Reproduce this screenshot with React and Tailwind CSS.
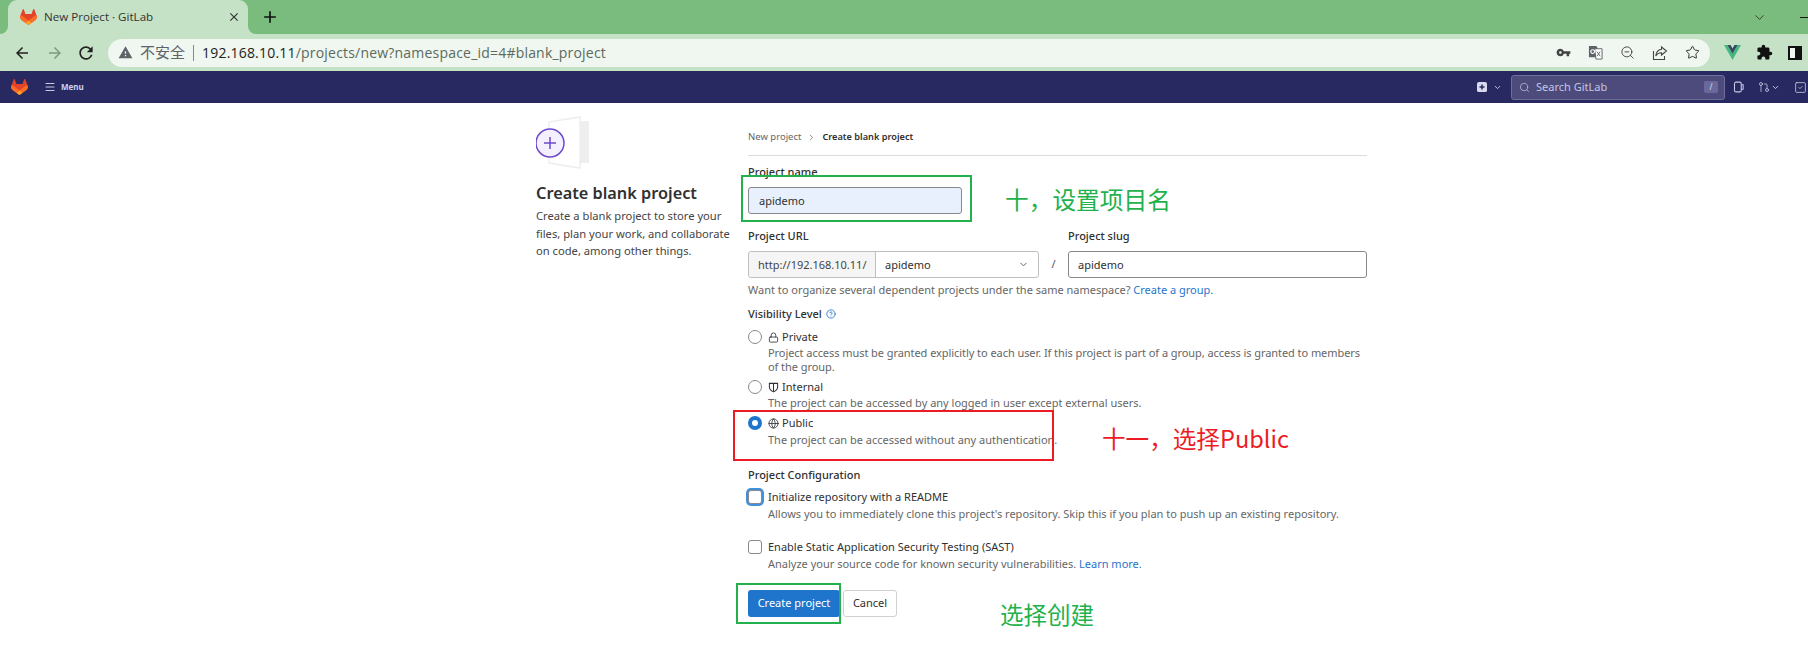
import React from 'react';
import {
  ChevronDown,
  ChevronRight,
  CircleHelp,
  Globe,
  GitPullRequest,
  Lock,
  Search,
  SquareCheck,
  Star,
  ZoomOut,
  Menu,
} from 'lucide-react';
import { MdAdd, MdArrowBack, MdArrowForward, MdClose, MdExtension, MdRefresh, MdVpnKey, MdWarning } from 'react-icons/md';

const pageFont = "font-['Noto_Sans','Open_Sans',sans-serif]";
const cjk = "font-['Noto_Sans_CJK_SC','Noto_Sans',sans-serif]";

const GitLabLogo = ({ className }) => (
  <svg viewBox="0 0 25 24" className={className}>
    <path fill="#E24329" d="M24.507 9.5l-.034-.09L21.082.562a.896.896 0 00-1.694.091l-2.29 7.01H7.825L5.535.653a.898.898 0 00-1.694-.09L.451 9.411.416 9.5a6.297 6.297 0 002.09 7.278l.012.01.03.022 5.16 3.867 2.56 1.935 1.554 1.176a1.051 1.051 0 001.268 0l1.555-1.176 2.56-1.935 5.197-3.89.014-.01A6.297 6.297 0 0024.507 9.5z" />
    <path fill="#FC6D26" d="M24.507 9.5l-.034-.09a11.44 11.44 0 00-4.56 2.051l-7.447 5.632 4.742 3.584 5.197-3.89.014-.01A6.297 6.297 0 0024.507 9.5z" />
    <path fill="#FCA326" d="M7.707 20.677l2.56 1.935 1.555 1.176a1.051 1.051 0 001.268 0l1.555-1.176 2.56-1.935-4.743-3.584-4.755 3.584z" />
    <path fill="#FC6D26" d="M5.01 11.461a11.43 11.43 0 00-4.56-2.05L.416 9.5a6.297 6.297 0 002.09 7.278l.012.01.03.022 5.16 3.867 4.745-3.584-7.444-5.632z" />
  </svg>
);

const TranslateIcon = () => (
  <svg viewBox="0 0 16 16" className="w-[15px] h-[15px]">
    <path fill="#5f6368" d="M1 1h8l1 2v10H1z" />
    <path fill="#fff" stroke="#5f6368" d="M7 4h8v11H8.5z" />
    <circle cx="5" cy="7" r="2" fill="none" stroke="#fff" strokeWidth="1.2" />
    <path stroke="#5f6368" strokeWidth="1" d="M9.5 7l3.5 5M13 7l-3.5 5" />
  </svg>
);

const ShareIcon = () => (
  <svg viewBox="0 0 16 16" className="w-[16px] h-[16px]" fill="none" stroke="#444" strokeWidth="1.1">
    <path d="M1.5 6v8.5h11V11" />
    <path d="M9.5 2l5 4-5 4V7.8C7 7.8 5 8.6 3.8 11 4 7.5 6 4.8 9.5 4.2z" />
  </svg>
);

const VueLogo = () => (
  <svg viewBox="0 0 16 14" className="w-[17px] h-[15px]">
    <path fill="#42b883" d="M0 0h3.2L8 8.2 12.8 0H16L8 14z" />
    <path fill="#35495e" d="M3.2 0h2.9L8 3.3 9.9 0h2.9L8 8.2z" />
  </svg>
);

const SidePanelIcon = () => (
  <svg viewBox="0 0 14 14" className="w-[14px] h-[14px]">
    <path fill="#111" d="M0 0h14v14H0z" />
    <path fill="#f0f6f0" d="M2 2h5v10H2z" />
  </svg>
);

const NewIcon = () => (
  <svg viewBox="0 0 16 16" className="w-[10px] h-[10px]">
    <rect width="16" height="16" rx="3" fill="#d9d9ef" />
    <path stroke="#292961" strokeWidth="2.4" d="M8 4v8M4 8h8" />
  </svg>
);

const IssuesIcon = () => (
  <svg viewBox="0 0 16 16" className="w-[12px] h-[14px]" fill="none" stroke="#c9c9e4" strokeWidth="1.4">
    <rect x="2" y="1.5" width="9" height="13" rx="2" />
    <path d="M11 5h2.5v6H11" />
  </svg>
);

const ShieldIcon = () => (
  <svg viewBox="0 0 12 12" className="w-[11px] h-[11px] ml-[6px]" fill="none" stroke="#303030" strokeWidth="1.1">
    <path d="M1.5 1.5h9v4c0 2.6-2 4.2-4.5 5.3C3.500 9.700 1.500 8.100 1.500 5.500z" />
    <path d="M6 1.500v9" />
  </svg>
);

const Illustration = () => (
  <svg viewBox="0 0 54 53" className="w-[54px] h-[53px] block">
    <path d="M44 5h9v42h-9z" fill="#eee" />
    <path d="M13 6 44 1v51l-31-5z" fill="#fff" stroke="#eee" strokeWidth="1.5" />
    <circle cx="14" cy="27" r="14" fill="#f4f0ff" stroke="#6e49cb" strokeWidth="1.5" />
    <path d="M14 21v12M8 27h12" stroke="#6e49cb" strokeWidth="1.5" />
  </svg>
);

const Radio = ({ checked }) =>
  checked ? (
    <span className="w-[14px] h-[14px] rounded-full bg-[#1f75cb] flex items-center justify-center shrink-0">
      <span className="w-[6px] h-[6px] rounded-full bg-white" />
    </span>
  ) : (
    <span className="w-[14px] h-[14px] rounded-full border border-[#89888d] bg-white shrink-0" />
  );

const VisibilityOption = ({ icon, label, checked, className }) => (
  <div className={`flex items-center h-[18px] ${className}`}>
    <Radio checked={checked} />
    {icon}
    <span className="ml-[3px] text-[#303030]">{label}</span>
  </div>
);

const Help = ({ children, className = '' }) => (
  <p className={`pl-[20px] leading-[14px] text-[#666] whitespace-nowrap ${className}`}>{children}</p>
);

const Label = ({ children, className = '' }) => (
  <div className={`h-[18px] leading-[18px] font-medium text-[#303030] ${className}`}>{children}</div>
);

const CheckOption = ({ focused, label, className }) => (
  <div className={`flex items-center h-[18px] ${className}`}>
    <span
      className={`w-[14px] h-[14px] rounded-[3px] border border-[#89888d] bg-white shrink-0 ${
        focused ? 'ring-2 ring-[#428fdc]' : ''
      }`}
    />
    <span className="ml-[6px] text-[#303030]">{label}</span>
  </div>
);

const Marker = ({ className }) => <div className={`absolute border-2 pointer-events-none ${className}`} />;

const App = () => {
  return (
    <div className={`relative w-[1808px] h-[664px] overflow-hidden bg-white ${pageFont}`}>
      {/* browser tab strip */}
      <div className="flex h-[34px] bg-[#7abb7e] pl-[8px]">
        <div className="relative flex items-center w-[240px] bg-[#c5e1c6] rounded-t-[9px] pl-[12px] pr-[7px]">
          <span className="absolute -left-[8px] bottom-0 w-[8px] h-[8px] bg-[#c5e1c6]">
            <span className="block w-[8px] h-[8px] bg-[#7abb7e] rounded-br-[8px]" />
          </span>
          <span className="absolute -right-[8px] bottom-0 w-[8px] h-[8px] bg-[#c5e1c6]">
            <span className="block w-[8px] h-[8px] bg-[#7abb7e] rounded-bl-[8px]" />
          </span>
          <GitLabLogo className="w-[17px] h-[16px] shrink-0" />
          <span className="ml-[7px] text-[11.6px] text-[#333] font-['Open_Sans',sans-serif] flex-1">New Project · GitLab</span>
          <MdClose size={14} className="text-[#333]" />
        </div>
        <div className="ml-[12px] flex items-center">
          <MdAdd size={20} className="text-[#111]" />
        </div>
        <div className="ml-auto flex items-center gap-[33px]">
          <ChevronDown size={15} strokeWidth={1.2} className="text-[#222]" />
          <span className="w-[8px] h-px bg-[#111]" />
        </div>
      </div>

      {/* address bar */}
      <div className="flex items-center h-[37px] bg-[#c5e1c6] pl-[13px]">
        <MdArrowBack size={18} className="text-[#222]" />
        <MdArrowForward size={18} className="ml-[15px] text-[#7e9a80]" />
        <MdRefresh size={20} className="ml-[12px] text-[#222]" />
        <div className="ml-[12px] flex items-center flex-1 h-[28px] bg-[#f0f6f0] rounded-full pl-[10px] pr-[10px]">
          <MdWarning size={15} className="text-[#5f6368]" />
          <span className={`ml-[7px] text-[15px] text-[#5f6368] ${cjk}`}>不安全</span>
          <span className="ml-[8px] w-px h-[16px] bg-[#888]" />
          <span className="ml-[8px] text-[14px] tracking-[0.2px] font-['Open_Sans',sans-serif] text-[#222]">192.168.10.11</span>
          <span className="text-[14px] tracking-[0.2px] font-['Open_Sans',sans-serif] text-[#5b6b5d]">/projects/new?namespace_id=4#blank_project</span>
          <div className="ml-auto flex items-center gap-[17px]">
            <MdVpnKey size={15} className="text-[#444]" />
            <TranslateIcon />
            <ZoomOut size={15} strokeWidth={1.5} className="text-[#444]" />
            <ShareIcon />
            <Star size={15} strokeWidth={1.6} className="text-[#333]" />
          </div>
        </div>
        <div className="ml-[14px] flex items-center gap-[15px] pr-[6px]">
          <VueLogo />
          <MdExtension size={17} className="text-[#111]" />
          <SidePanelIcon />
        </div>
      </div>

      {/* gitlab top nav */}
      <div className="flex items-center h-[32px] bg-[#292961] pl-[11px]">
        <GitLabLogo className="w-[17px] h-[16px]" />
        <Menu size={12} strokeWidth={2} className="ml-[16px] text-[#c9c9e4]" />
        <span className="ml-[5px] text-[8px] font-bold text-[#c9d4f5]">Menu</span>
        <div className="ml-auto flex items-center">
          <NewIcon />
          <ChevronDown size={9} strokeWidth={2.5} className="ml-[6px] text-[#c9c9e4]" />
          <div className="ml-[9px] flex items-center w-[214px] h-[25px] bg-[#4c4b7b] border border-[#6e6d9c] rounded-[3px] pl-[7px] pr-[6px]">
            <Search size={11} strokeWidth={1.5} className="text-[#c9c9e4]" />
            <span className="ml-[6px] text-[11px] text-[#c5c5e6]">Search GitLab</span>
            <span className="ml-auto w-[14px] h-[12px] bg-[#6a699b] rounded-[2px] text-[8px] leading-[12px] text-center text-[#dcdcf0]">/</span>
          </div>
          <div className="ml-[8px]">
            <IssuesIcon />
          </div>
          <GitPullRequest size={12} strokeWidth={1.6} className="ml-[13px] text-[#c9c9e4]" />
          <ChevronDown size={9} strokeWidth={2.5} className="ml-[1px] text-[#c9c9e4]" />
          <SquareCheck size={13} strokeWidth={1.5} className="ml-[14px] mr-[1px] text-[#c9c9e4]" />
        </div>
      </div>

      {/* page body */}
      <div className="flex pl-[536px] text-[11px]">
        <div className="w-[212px] pt-[13px] shrink-0">
          <Illustration />
          <h4 className="mt-[12px] text-[16.3px] leading-[24px] font-semibold text-[#303030]">Create blank project</h4>
          <p className="mt-[2px] w-[200px] text-[11.2px] leading-[17.5px] text-[#444]">
            Create a blank project to store your<br />files, plan your work, and collaborate<br />on code, among other things.
          </p>
        </div>

        <div className="w-[619px] shrink-0">
          <div className="flex items-center h-[18px] mt-[25px] text-[9.5px]">
            <span className="text-[#666]">New project</span>
            <ChevronRight size={9} className="mx-[6px] text-[#666]" />
            <span className="font-semibold text-[9.2px] text-[#303030]">Create blank project</span>
          </div>
          <div className="mt-[9px] border-b border-[#dcdcde]" />

          <Label className="mt-[7px]">Project name</Label>
          <div className="mt-[6px] w-[214px] h-[27px] bg-[#e8f0fe] border border-[#89888d] rounded-[3px] pl-[10px] leading-[25px] text-[#303030]">
            apidemo
          </div>

          <div className="flex mt-[13px]">
            <Label className="w-[320px]">Project URL</Label>
            <Label>Project slug</Label>
          </div>
          <div className="flex items-center mt-[6px] h-[27px]">
            <div className="flex w-[291px] h-[27px] border border-[#bfbfc3] rounded-[3px] leading-[25px] text-[#303030]">
              <span className="w-[127px] pl-[9px] bg-[#f5f5f5] border-r border-[#bfbfc3] text-[#444] rounded-l-[3px]">http://192.168.10.11/</span>
              <span className="flex flex-1 items-center pl-[9px] pr-[9px] justify-between">
                apidemo
                <ChevronDown size={11} className="text-[#555]" />
              </span>
            </div>
            <span className="w-[29px] text-center text-[#555]">/</span>
            <div className="flex-1 h-[27px] border border-[#89888d] rounded-[3px] pl-[9px] leading-[25px] text-[#303030]">apidemo</div>
          </div>
          <p className="mt-[3px] h-[18px] leading-[18px] text-[#666]">
            Want to organize several dependent projects under the same namespace? <span className="text-[#1f75cb]">Create a group.</span>
          </p>

          <Label className="mt-[6px] flex items-center">
            Visibility Level
            <CircleHelp size={10} className="ml-[4px] text-[#1f75cb]" />
          </Label>

          <VisibilityOption
            icon={<Lock size={11} strokeWidth={1.8} className="ml-[6px] text-[#303030]" />}
            label="Private"
            className="mt-[5px]"
          />
          <Help className="tracking-[-0.06px]">
            Project access must be granted explicitly to each user. If this project is part of a group, access is granted to members
            <br />
            of the group.
          </Help>
          <VisibilityOption icon={<ShieldIcon />} label="Internal" className="mt-[4px]" />
          <Help>The project can be accessed by any logged in user except external users.</Help>
          <VisibilityOption
            icon={<Globe size={11} strokeWidth={1.8} className="ml-[6px] text-[#303030]" />}
            label="Public"
            checked
            className="mt-[4px]"
          />
          <Help className="mt-[1px]">The project can be accessed without any authentication.</Help>

          <Label className="mt-[19px]">Project Configuration</Label>
          <CheckOption focused label="Initialize repository with a README" className="mt-[4px]" />
          <Help className="mt-[1px]">Allows you to immediately clone this project's repository. Skip this if you plan to push up an existing repository.</Help>
          <CheckOption label="Enable Static Application Security Testing (SAST)" className="mt-[17px]" />
          <Help className="mt-[1px]">
            Analyze your source code for known security vulnerabilities. <span className="text-[#1f75cb]">Learn more.</span>
          </Help>

          <div className="flex mt-[19px] gap-[3px]">
            <button className="w-[92px] h-[27px] bg-[#1f75cb] rounded-[3px] text-white">Create project</button>
            <button className="w-[54px] h-[27px] bg-white border border-[#d0d0d4] rounded-[3px] text-[#303030]">Cancel</button>
          </div>
        </div>
      </div>

      {/* screenshot annotations */}
      <Marker className="left-[741px] top-[175px] w-[231px] h-[47px] border-[#22b14c]" />
      <Marker className="left-[733px] top-[410px] w-[321px] h-[51px] border-[#ed1c24]" />
      <Marker className="left-[736px] top-[583px] w-[105px] h-[41px] border-[#22b14c]" />
      <span className={`absolute left-[1005px] top-[182px] text-[23.7px] leading-[34px] text-[#22b14c] ${cjk}`}>十，设置项目名</span>
      <span className={`absolute left-[1102px] top-[421px] text-[23.6px] leading-[34px] text-[#ed1c24] ${cjk}`}>十一，选择Public</span>
      <span className={`absolute left-[1000px] top-[597px] text-[23.5px] leading-[34px] text-[#22b14c] ${cjk}`}>选择创建</span>
    </div>
  );
};

export default App;
